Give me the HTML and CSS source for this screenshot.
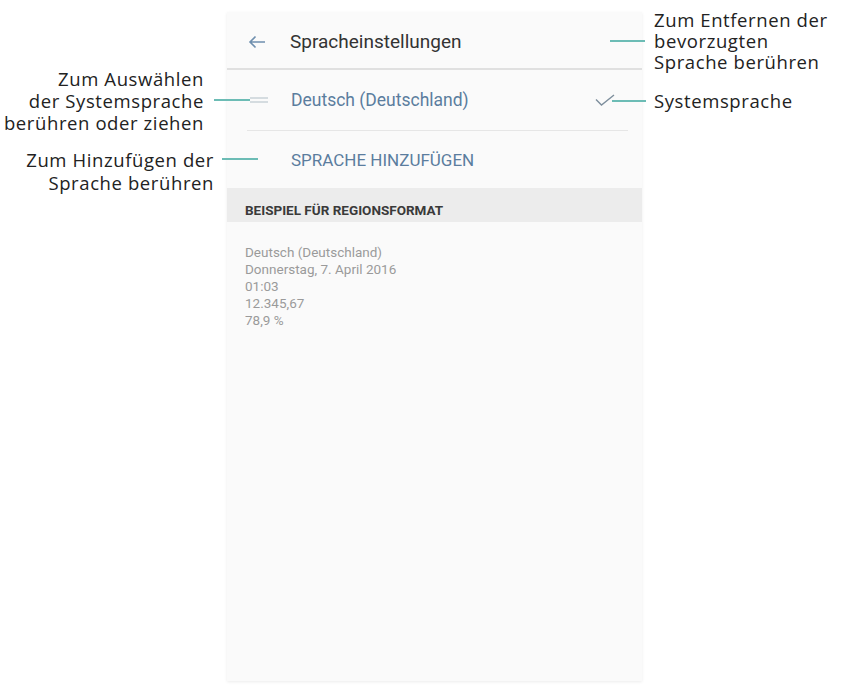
FILE: index.html
```html
<!DOCTYPE html>
<html>
<head>
    <title>Spracheinstellungen</title>
    <link rel="stylesheet" href="styles.css">
</head>
<body>
    <div class="figure">
        <!-- phone screen -->
        <div class="screen">
            <div class="header">
                <svg class="back" width="18" height="14" viewBox="0 0 18 14">
                    <path d="M17 7H2M7.5 1.5L2 7l5.5 5.5" fill="none" stroke="#6f8fae" stroke-width="1.6"/>
                </svg>
                <span class="title">Spracheinstellungen</span>
            </div>
            <div class="row lang">
                <svg class="handle" width="18" height="6" viewBox="0 0 18 6">
                    <path d="M0 1h18M0 5h18" stroke="#c9d2d8" stroke-width="1.4"/>
                </svg>
                <span class="label">Deutsch (Deutschland)</span>
                <svg class="check" width="20" height="12" viewBox="0 0 20 12">
                    <path d="M1 5.5l5.5 5.5L19 1" fill="none" stroke="#7d8e9c" stroke-width="1.4"/>
                </svg>
            </div>
            <div class="row add">
                <span class="label caps">SPRACHE HINZUFÜGEN</span>
            </div>
            <div class="section">BEISPIEL FÜR REGIONSFORMAT</div>
            <div class="sample">
                <div>Deutsch (Deutschland)</div>
                <div>Donnerstag, 7. April 2016</div>
                <div>01:03</div>
                <div>12.345,67</div>
                <div>78,9 %</div>
            </div>
        </div>

        <!-- callouts -->
        <div class="note note-select">Zum Auswählen<br>der Systemsprache<br>berühren oder ziehen</div>
        <div class="note note-add">Zum Hinzufügen der<br>Sprache berühren</div>
        <div class="note note-remove">Zum Entfernen der<br>bevorzugten<br>Sprache berühren</div>
        <div class="note note-system">Systemsprache</div>

        <div class="lead lead-select"></div>
        <div class="lead lead-add"></div>
        <div class="lead lead-remove"></div>
        <div class="lead lead-system"></div>
    </div>
</body>
</html>
```

FILE: styles.css
```css
body {
    margin: 0;
    background-color: #fff;
    font-family: Roboto, "Liberation Sans", Arial, sans-serif;
}
.figure {
    position: relative;
    width: 843px;
    height: 687px;
}
.screen {
    position: absolute;
    left: 227px;
    top: 12px;
    width: 415px;
    height: 669px;
    background-color: #fafafa;
    box-shadow: 0 1px 3px rgba(0, 0, 0, 0.08);
}
.header {
    display: flex;
    align-items: center;
    box-sizing: border-box;
    height: 58px;
    padding: 3px 0 0 21px;
    border-bottom: 2px solid #e0e0e0;
}
.back {
    margin-right: 24px;
}
.title {
    font-size: 19px;
    color: #333;
}
.row {
    display: flex;
    align-items: center;
    margin: 0 14px 0 20px;
}
.lang {
    height: 60px;
    border-bottom: 1px solid #e6e6e6;
}
.handle {
    margin-left: 3px;
    margin-right: 23px;
}
.check {
    margin-left: auto;
    margin-right: 13px;
}
.add {
    height: 57px;
    padding-left: 44px;
}
.label {
    font-size: 17.5px;
    color: #5b7d9e;
}
.caps {
    font-size: 17px;
}
.section {
    box-sizing: border-box;
    height: 34px;
    padding: 10px 0 0 18px;
    line-height: 24px;
    background-color: #ececec;
    font-size: 13.5px;
    font-weight: bold;
    color: #3a3a3a;
}
.sample {
    padding: 22px 0 0 18px;
    font-size: 13.5px;
    line-height: 17px;
    color: #9a9a9a;
}
.note {
    position: absolute;
    font-family: "Open Sans", "Noto Sans", sans-serif;
    font-size: 18.5px;
    letter-spacing: 0.6px;
    line-height: 22px;
    color: #222;
}
.note-select {
    right: 639px;
    top: 68px;
    text-align: right;
}
.note-add {
    right: 629px;
    top: 148px;
    line-height: 23px;
    text-align: right;
}
.note-remove {
    left: 654px;
    top: 9px;
    line-height: 21px;
}
.note-system {
    left: 654px;
    top: 90px;
}
.lead {
    position: absolute;
    height: 2px;
    background-color: #6cbcb5;
}
.lead-select {
    left: 214px;
    top: 99px;
    width: 36px;
}
.lead-add {
    left: 222px;
    top: 158px;
    width: 36px;
}
.lead-remove {
    left: 610px;
    top: 40px;
    width: 35px;
}
.lead-system {
    left: 612px;
    top: 100px;
    width: 34px;
}
```
